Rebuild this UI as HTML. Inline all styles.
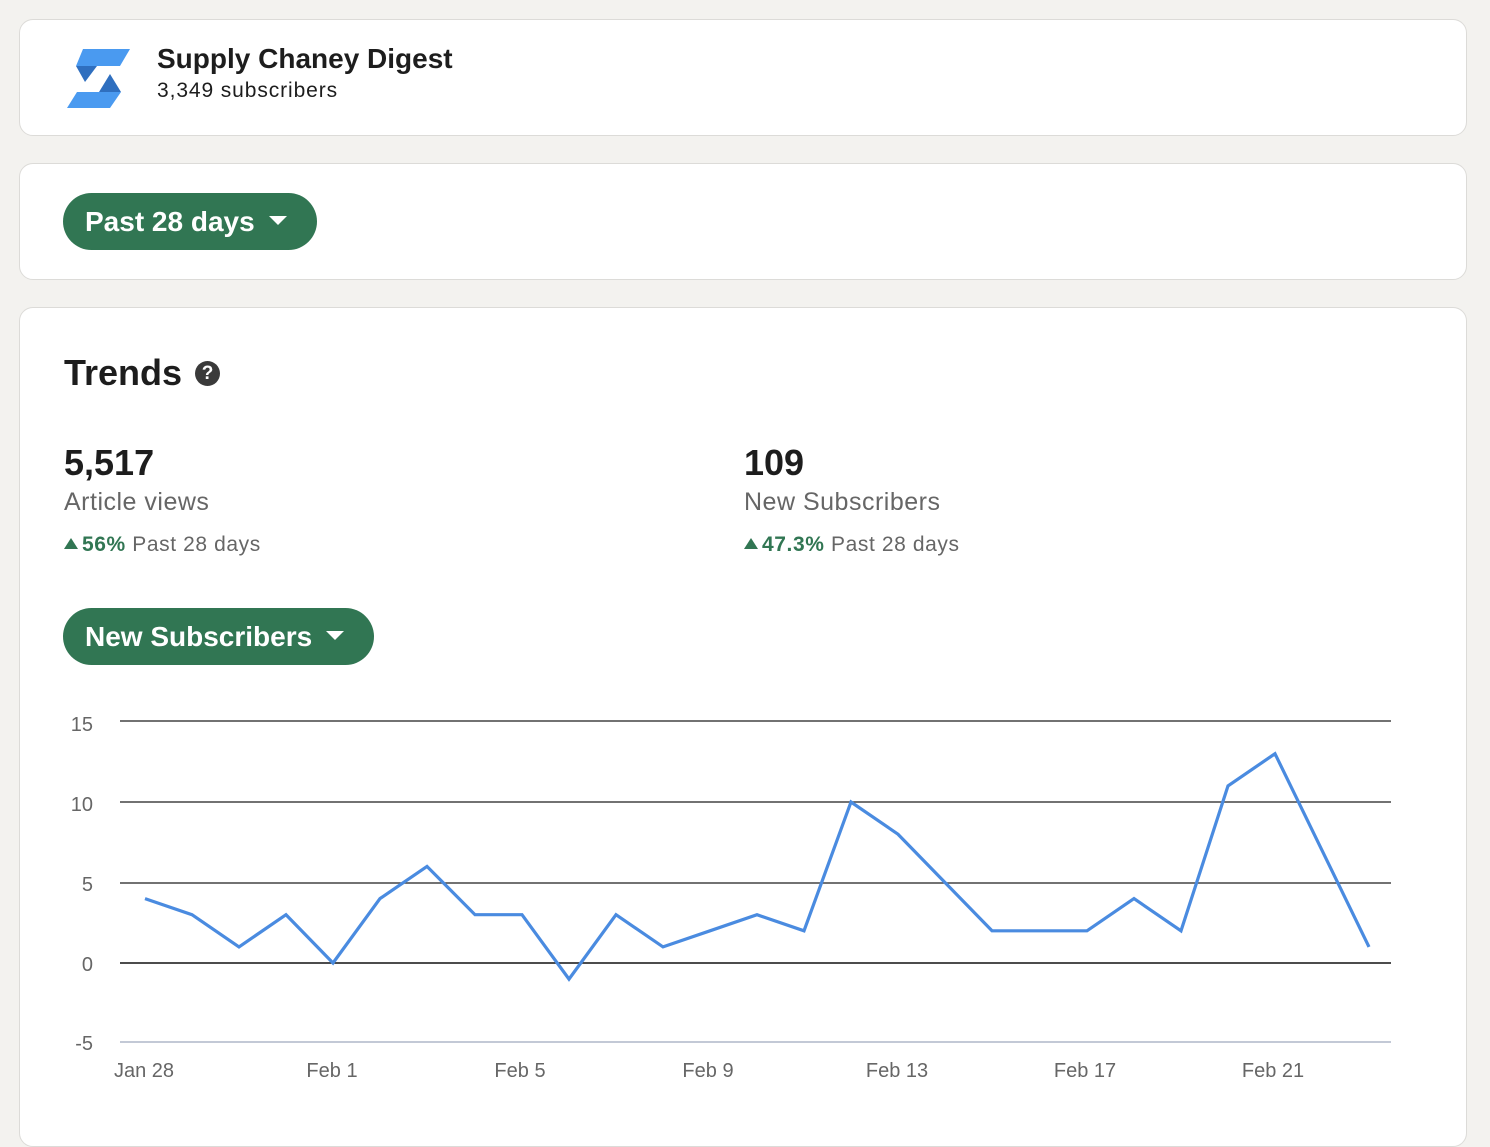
<!DOCTYPE html>
<html><head><meta charset="utf-8"><style>
body{margin:0;width:1490px;height:1122px;background:#f3f2ef;font-family:"Liberation Sans",sans-serif;position:relative;overflow:hidden}
.card{position:absolute;left:19px;width:1448px;background:#fff;border:1px solid #dcdbd8;border-radius:14px;box-sizing:border-box}
.abs{position:absolute;white-space:nowrap}
.pill{position:absolute;background:#317653;color:#fff;border-radius:29px;font-weight:bold;font-size:28px;box-sizing:border-box;height:57px;line-height:57px;padding-left:22px}
.tri{display:inline-block;width:0;height:0;border-left:9px solid transparent;border-right:9px solid transparent;border-top:9px solid #fff;vertical-align:middle;margin-left:14px;position:relative;top:-3px}
.up{display:inline-block;width:0;height:0;border-left:7px solid transparent;border-right:7px solid transparent;border-bottom:11px solid #317653;margin-right:4px;position:relative;top:-2px}
</style></head><body>
<div class="card" style="top:19px;height:117px"></div>
<div class="card" style="top:163px;height:117px"></div>
<div class="card" style="top:307px;height:840px"></div>

<svg class="abs" style="left:60px;top:40px" width="80" height="80" viewBox="0 0 80 80">
<polygon points="23,9 70,9 60,26 16,26" fill="#4a9af0"/>
<polygon points="16,26 37,26 25,42" fill="#2f6fbf"/>
<polygon points="50,34 39,52 61,52" fill="#2f6fbf"/>
<polygon points="17,52 61,52 50,68 7,68" fill="#4a9af0"/>
</svg>
<div class="abs" style="left:157px;top:43px;font-size:28px;font-weight:bold;color:#1d1d1d">Supply Chaney Digest</div>
<div class="abs" style="left:157px;top:79px;font-size:21px;color:#1d1d1d;letter-spacing:0.9px">3,349 subscribers</div>

<div class="pill" style="left:63px;top:193px;width:254px">Past 28 days<span class="tri"></span></div>

<div class="abs" style="left:64px;top:352px;font-size:36px;font-weight:bold;color:#1d1d1d">Trends</div>
<div class="abs" style="left:195px;top:361px;width:25px;height:25px;border-radius:50%;background:#3a3a3a;color:#fff;font-size:19px;font-weight:bold;text-align:center;line-height:25px">?</div>

<div class="abs" style="left:64px;top:442px;font-size:36px;font-weight:bold;color:#1d1d1d">5,517</div>
<div class="abs" style="left:64px;top:488px;font-size:25px;color:#666;letter-spacing:0.5px">Article views</div>
<div class="abs" style="left:64px;top:533px;font-size:21px;color:#666;letter-spacing:0.6px"><span class="up"></span><b style="color:#317653">56%</b> Past 28 days</div>

<div class="abs" style="left:744px;top:442px;font-size:36px;font-weight:bold;color:#1d1d1d">109</div>
<div class="abs" style="left:744px;top:488px;font-size:25px;color:#666;letter-spacing:0.5px">New Subscribers</div>
<div class="abs" style="left:744px;top:533px;font-size:21px;color:#666;letter-spacing:0.6px"><span class="up"></span><b style="color:#317653">47.3%</b> Past 28 days</div>

<div class="pill" style="left:63px;top:608px;width:311px">New Subscribers<span class="tri"></span></div>

<svg class="abs" style="left:0;top:0" width="1490" height="1122">
<g stroke="#444" stroke-width="1.5">
<line x1="120" y1="721" x2="1391" y2="721"/>
<line x1="120" y1="802" x2="1391" y2="802"/>
<line x1="120" y1="883" x2="1391" y2="883"/>
<line x1="120" y1="963" x2="1391" y2="963" stroke="#111"/>
</g>
<line x1="120" y1="1042" x2="1391" y2="1042" stroke="#c3c9d6" stroke-width="2"/>
<g font-family="Liberation Sans, sans-serif" font-size="20" fill="#666">
<text x="93" y="731" text-anchor="end">15</text>
<text x="93" y="811" text-anchor="end">10</text>
<text x="93" y="891" text-anchor="end">5</text>
<text x="93" y="971" text-anchor="end">0</text>
<text x="93" y="1050" text-anchor="end">-5</text>
<text x="144" y="1077" text-anchor="middle">Jan 28</text>
<text x="332" y="1077" text-anchor="middle">Feb 1</text>
<text x="520" y="1077" text-anchor="middle">Feb 5</text>
<text x="708" y="1077" text-anchor="middle">Feb 9</text>
<text x="897" y="1077" text-anchor="middle">Feb 13</text>
<text x="1085" y="1077" text-anchor="middle">Feb 17</text>
<text x="1273" y="1077" text-anchor="middle">Feb 21</text>
</g>
<polyline fill="none" stroke="#4a8be0" stroke-width="3.2" stroke-linejoin="miter" points="145,898.6 192,914.7 239,946.9 286,914.7 333,963 380,898.6 427,866.4 475,914.7 522,914.7 569,979.1 616,914.7 663,946.9 710,930.8 757,914.7 804,930.8 851,802 898,834.2 945,882.5 992,930.8 1040,930.8 1087,930.8 1134,898.6 1181,930.8 1228,785.9 1275,753.7 1322,850.3 1369,946.9"/>
</svg>
</body></html>
